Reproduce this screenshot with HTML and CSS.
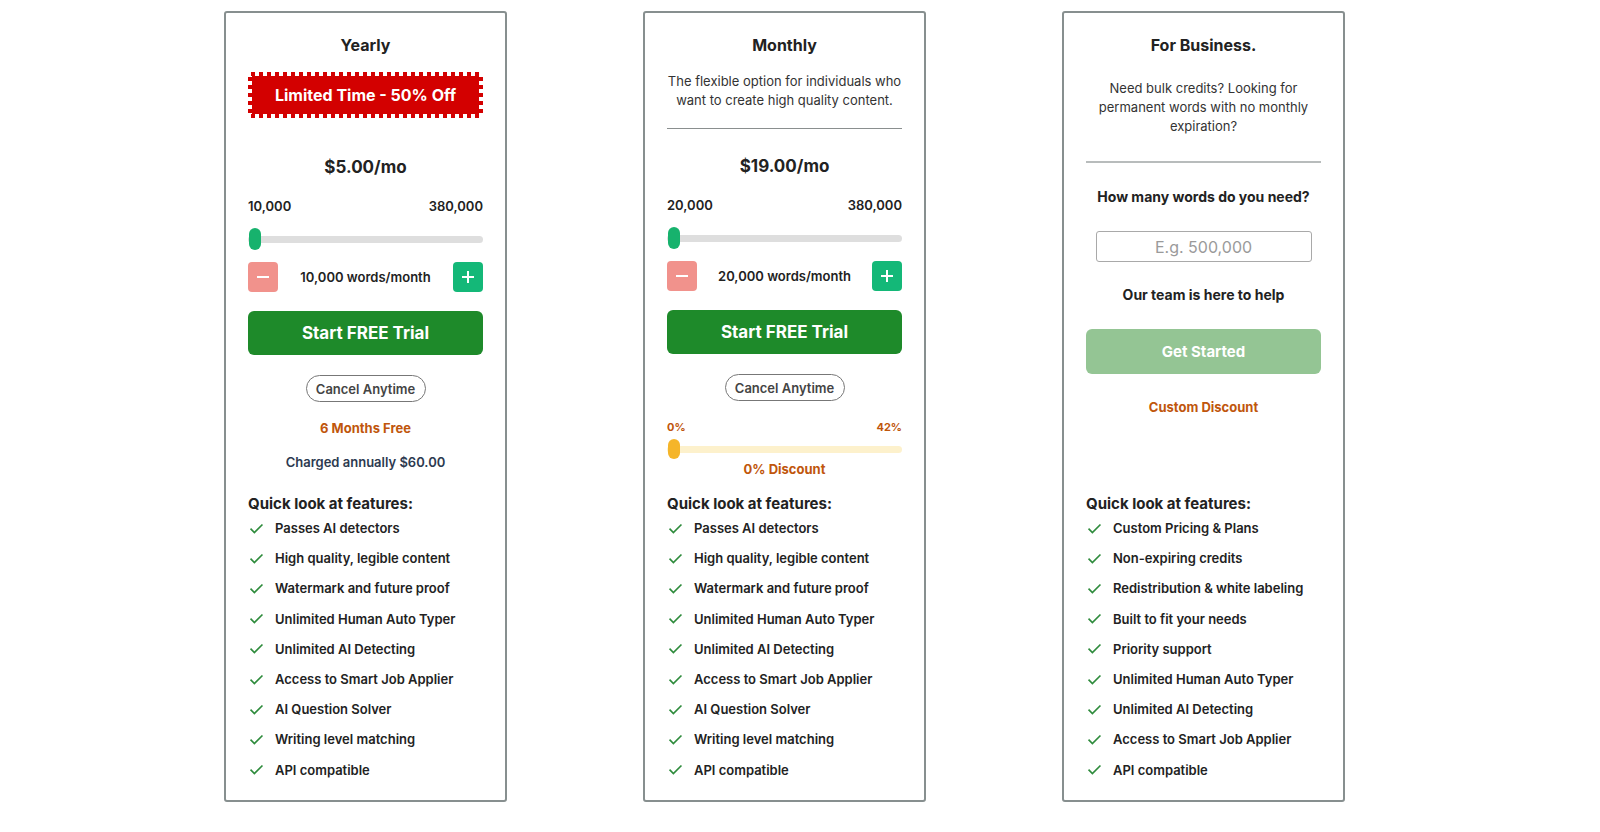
FILE: index.html
```html
<!DOCTYPE html>
<html lang="en">
<head>
<meta charset="utf-8">
<title>Pricing</title>
<link rel="stylesheet" href="styles.css">
</head>
<body>
<div class="plans">
  <!-- Yearly -->
  <div class="card">
    <div class="top">
      <h2 class="title">Yearly</h2>
      <div class="stamp">Limited Time - 50% Off</div>
      <div class="price price-yearly">$5.00/mo</div>
      <div class="range-labels"><span>10,000</span><span>380,000</span></div>
      <div class="slider"><div class="track"></div><div class="thumb"></div></div>
      <div class="stepper">
        <button class="step minus"><svg width="14" height="14" viewBox="0 0 14 14"><path d="M1 7h12" stroke="#fff" stroke-width="2"/></svg></button>
        <span class="step-label">10,000 words/month</span>
        <button class="step plus"><svg width="14" height="14" viewBox="0 0 14 14"><path d="M1 7h12M7 1v12" stroke="#fff" stroke-width="2"/></svg></button>
      </div>
      <button class="cta">Start FREE Trial</button>
      <div class="pill-row"><span class="pill">Cancel Anytime</span></div>
      <div class="orange promo">6 Months Free</div>
      <div class="charged">Charged annually $60.00</div>
    </div>
    <div class="features">
      <div class="features-head">Quick look at features:</div>
      <ul>
        <li><svg class="check" viewBox="0 0 16 12"><path d="M1.5 6.2l4.2 4.2L14.5 1.6" fill="none" stroke="#2e8b3c" stroke-width="1.8"/></svg>Passes AI detectors</li>
        <li><svg class="check" viewBox="0 0 16 12"><path d="M1.5 6.2l4.2 4.2L14.5 1.6" fill="none" stroke="#2e8b3c" stroke-width="1.8"/></svg>High quality, legible content</li>
        <li><svg class="check" viewBox="0 0 16 12"><path d="M1.5 6.2l4.2 4.2L14.5 1.6" fill="none" stroke="#2e8b3c" stroke-width="1.8"/></svg>Watermark and future proof</li>
        <li><svg class="check" viewBox="0 0 16 12"><path d="M1.5 6.2l4.2 4.2L14.5 1.6" fill="none" stroke="#2e8b3c" stroke-width="1.8"/></svg>Unlimited Human Auto Typer</li>
        <li><svg class="check" viewBox="0 0 16 12"><path d="M1.5 6.2l4.2 4.2L14.5 1.6" fill="none" stroke="#2e8b3c" stroke-width="1.8"/></svg>Unlimited AI Detecting</li>
        <li><svg class="check" viewBox="0 0 16 12"><path d="M1.5 6.2l4.2 4.2L14.5 1.6" fill="none" stroke="#2e8b3c" stroke-width="1.8"/></svg>Access to Smart Job Applier</li>
        <li><svg class="check" viewBox="0 0 16 12"><path d="M1.5 6.2l4.2 4.2L14.5 1.6" fill="none" stroke="#2e8b3c" stroke-width="1.8"/></svg>AI Question Solver</li>
        <li><svg class="check" viewBox="0 0 16 12"><path d="M1.5 6.2l4.2 4.2L14.5 1.6" fill="none" stroke="#2e8b3c" stroke-width="1.8"/></svg>Writing level matching</li>
        <li><svg class="check" viewBox="0 0 16 12"><path d="M1.5 6.2l4.2 4.2L14.5 1.6" fill="none" stroke="#2e8b3c" stroke-width="1.8"/></svg>API compatible</li>
      </ul>
    </div>
  </div>

  <!-- Monthly -->
  <div class="card">
    <div class="top">
      <h2 class="title">Monthly</h2>
      <p class="desc desc-monthly">The flexible option for individuals who want to create high quality content.</p>
      <hr class="rule rule-monthly">
      <div class="price price-monthly">$19.00/mo</div>
      <div class="range-labels"><span>20,000</span><span>380,000</span></div>
      <div class="slider"><div class="track"></div><div class="thumb"></div></div>
      <div class="stepper">
        <button class="step minus"><svg width="14" height="14" viewBox="0 0 14 14"><path d="M1 7h12" stroke="#fff" stroke-width="2"/></svg></button>
        <span class="step-label">20,000 words/month</span>
        <button class="step plus"><svg width="14" height="14" viewBox="0 0 14 14"><path d="M1 7h12M7 1v12" stroke="#fff" stroke-width="2"/></svg></button>
      </div>
      <button class="cta">Start FREE Trial</button>
      <div class="pill-row"><span class="pill">Cancel Anytime</span></div>
      <div class="range-labels orange small-labels"><span>0%</span><span>42%</span></div>
      <div class="slider discount-slider"><div class="track"></div><div class="thumb"></div></div>
      <div class="orange discount-label">0% Discount</div>
    </div>
    <div class="features">
      <div class="features-head">Quick look at features:</div>
      <ul>
        <li><svg class="check" viewBox="0 0 16 12"><path d="M1.5 6.2l4.2 4.2L14.5 1.6" fill="none" stroke="#2e8b3c" stroke-width="1.8"/></svg>Passes AI detectors</li>
        <li><svg class="check" viewBox="0 0 16 12"><path d="M1.5 6.2l4.2 4.2L14.5 1.6" fill="none" stroke="#2e8b3c" stroke-width="1.8"/></svg>High quality, legible content</li>
        <li><svg class="check" viewBox="0 0 16 12"><path d="M1.5 6.2l4.2 4.2L14.5 1.6" fill="none" stroke="#2e8b3c" stroke-width="1.8"/></svg>Watermark and future proof</li>
        <li><svg class="check" viewBox="0 0 16 12"><path d="M1.5 6.2l4.2 4.2L14.5 1.6" fill="none" stroke="#2e8b3c" stroke-width="1.8"/></svg>Unlimited Human Auto Typer</li>
        <li><svg class="check" viewBox="0 0 16 12"><path d="M1.5 6.2l4.2 4.2L14.5 1.6" fill="none" stroke="#2e8b3c" stroke-width="1.8"/></svg>Unlimited AI Detecting</li>
        <li><svg class="check" viewBox="0 0 16 12"><path d="M1.5 6.2l4.2 4.2L14.5 1.6" fill="none" stroke="#2e8b3c" stroke-width="1.8"/></svg>Access to Smart Job Applier</li>
        <li><svg class="check" viewBox="0 0 16 12"><path d="M1.5 6.2l4.2 4.2L14.5 1.6" fill="none" stroke="#2e8b3c" stroke-width="1.8"/></svg>AI Question Solver</li>
        <li><svg class="check" viewBox="0 0 16 12"><path d="M1.5 6.2l4.2 4.2L14.5 1.6" fill="none" stroke="#2e8b3c" stroke-width="1.8"/></svg>Writing level matching</li>
        <li><svg class="check" viewBox="0 0 16 12"><path d="M1.5 6.2l4.2 4.2L14.5 1.6" fill="none" stroke="#2e8b3c" stroke-width="1.8"/></svg>API compatible</li>
      </ul>
    </div>
  </div>

  <!-- Business -->
  <div class="card">
    <div class="top">
      <h2 class="title">For Business.</h2>
      <p class="desc desc-business">Need bulk credits? Looking for permanent words with no monthly expiration?</p>
      <hr class="rule rule-business">
      <div class="question">How many words do you need?</div>
      <div class="input-row"><input class="words-input" type="text" placeholder="E.g. 500,000"></div>
      <div class="question help">Our team is here to help</div>
      <button class="cta cta-light">Get Started</button>
      <div class="orange custom">Custom Discount</div>
    </div>
    <div class="features">
      <div class="features-head">Quick look at features:</div>
      <ul>
        <li><svg class="check" viewBox="0 0 16 12"><path d="M1.5 6.2l4.2 4.2L14.5 1.6" fill="none" stroke="#2e8b3c" stroke-width="1.8"/></svg>Custom Pricing &amp; Plans</li>
        <li><svg class="check" viewBox="0 0 16 12"><path d="M1.5 6.2l4.2 4.2L14.5 1.6" fill="none" stroke="#2e8b3c" stroke-width="1.8"/></svg>Non-expiring credits</li>
        <li><svg class="check" viewBox="0 0 16 12"><path d="M1.5 6.2l4.2 4.2L14.5 1.6" fill="none" stroke="#2e8b3c" stroke-width="1.8"/></svg>Redistribution &amp; white labeling</li>
        <li><svg class="check" viewBox="0 0 16 12"><path d="M1.5 6.2l4.2 4.2L14.5 1.6" fill="none" stroke="#2e8b3c" stroke-width="1.8"/></svg>Built to fit your needs</li>
        <li><svg class="check" viewBox="0 0 16 12"><path d="M1.5 6.2l4.2 4.2L14.5 1.6" fill="none" stroke="#2e8b3c" stroke-width="1.8"/></svg>Priority support</li>
        <li><svg class="check" viewBox="0 0 16 12"><path d="M1.5 6.2l4.2 4.2L14.5 1.6" fill="none" stroke="#2e8b3c" stroke-width="1.8"/></svg>Unlimited Human Auto Typer</li>
        <li><svg class="check" viewBox="0 0 16 12"><path d="M1.5 6.2l4.2 4.2L14.5 1.6" fill="none" stroke="#2e8b3c" stroke-width="1.8"/></svg>Unlimited AI Detecting</li>
        <li><svg class="check" viewBox="0 0 16 12"><path d="M1.5 6.2l4.2 4.2L14.5 1.6" fill="none" stroke="#2e8b3c" stroke-width="1.8"/></svg>Access to Smart Job Applier</li>
        <li><svg class="check" viewBox="0 0 16 12"><path d="M1.5 6.2l4.2 4.2L14.5 1.6" fill="none" stroke="#2e8b3c" stroke-width="1.8"/></svg>API compatible</li>
      </ul>
    </div>
  </div>
</div>
</body>
</html>
```

FILE: styles.css
```css
* { box-sizing: border-box; }
html, body { margin: 0; padding: 0; background: #fff; }
body {
  font-family: "Inter", "Liberation Sans", sans-serif;
  color: #222;
  width: 1600px;
  height: 832px;
  overflow: hidden;
}
.plans {
  display: flex;
  gap: 136px;
  padding: 11px 0 0 224px;
}
.card {
  width: 283px;
  height: 791px;
  border: 2px solid #878f8f;
  border-radius: 3px;
  padding: 0 22px;
  display: flex;
  flex-direction: column;
}
.top {
  height: 480px;
  padding-top: 21px;
  display: flex;
  flex-direction: column;
}
.title {
  margin: 0;
  font-size: 16px;
  line-height: 22px;
  font-weight: 700;
  text-align: center;
  color: #222;
}
.stamp {
  margin-top: 16px;
  height: 46px;
  color: #fff;
  font-weight: 700;
  font-size: 16px;
  display: flex;
  align-items: center;
  justify-content: center;
  background:
    linear-gradient(#d30000, #d30000) 4px 4px / calc(100% - 8px) calc(100% - 8px) no-repeat,
    repeating-linear-gradient(90deg, #d30000 0 4px, transparent 4px 8px) 3px 0 / calc(100% - 6px) 4px no-repeat,
    repeating-linear-gradient(90deg, #d30000 0 4px, transparent 4px 8px) 3px 100% / calc(100% - 6px) 4px no-repeat,
    repeating-linear-gradient(180deg, #d30000 0 4px, transparent 4px 8px) 0 5px / 4px calc(100% - 10px) no-repeat,
    repeating-linear-gradient(180deg, #d30000 0 4px, transparent 4px 8px) 100% 5px / 4px calc(100% - 10px) no-repeat;
}
.desc {
  margin: 0;
  font-size: 13px;
  line-height: 19px;
  text-align: center;
  color: #333;
}
.desc-monthly { margin-top: 16px; }
.desc-business { margin-top: 23px; padding: 0 8px; }
.rule {
  border: 0;
  height: 1px;
  background: #8a8f8f;
  margin: 0;
}
.rule-monthly { margin-top: 18px; }
.rule-business { margin-top: 25px; height: 2px; background: #b8bcbc; }
.price {
  font-size: 17px;
  line-height: 24px;
  font-weight: 700;
  text-align: center;
  color: #222;
}
.price-yearly { margin-top: 37px; }
.price-monthly { margin-top: 25px; }
.range-labels {
  margin-top: 18px;
  display: flex;
  justify-content: space-between;
  font-size: 13px;
  line-height: 18px;
  font-weight: 600;
  color: #222;
}
.slider {
  position: relative;
  margin-top: 13px;
  height: 22px;
  display: flex;
  align-items: center;
}
.track {
  width: 100%;
  height: 7px;
  border-radius: 4px;
  background: #dedede;
}
.thumb {
  position: absolute;
  left: 1px;
  top: 0;
  width: 12px;
  height: 22px;
  border-radius: 6px;
  background: #17b26d;
}
.stepper {
  margin-top: 12px;
  display: flex;
  align-items: center;
  justify-content: space-between;
  height: 30px;
}
.step {
  width: 30px;
  height: 30px;
  border: 0;
  border-radius: 4px;
  padding: 0;
  display: flex;
  align-items: center;
  justify-content: center;
}
.minus { background: #f1928c; }
.plus { background: #14b878; }
.step-label {
  font-size: 13px;
  font-weight: 600;
  color: #222;
}
.cta {
  margin-top: 19px;
  height: 44px;
  width: 100%;
  border: 0;
  border-radius: 6px;
  background: #1e8a2a;
  color: #fff;
  font-family: inherit;
  font-size: 17px;
  font-weight: 700;
}
.pill-row {
  margin-top: 20px;
  display: flex;
  justify-content: center;
}
.pill {
  height: 27px;
  width: 120px;
  border: 1px solid #777;
  border-radius: 14px;
  display: flex;
  align-items: center;
  justify-content: center;
  font-size: 13px;
  font-weight: 600;
  color: #444;
}
.orange { color: #c0560c; font-weight: 700; }
.promo {
  margin-top: 17px;
  font-size: 13px;
  line-height: 18px;
  text-align: center;
}
.charged {
  margin-top: 16px;
  font-size: 13px;
  line-height: 18px;
  font-weight: 600;
  text-align: center;
  color: #2d3a50;
}
.small-labels {
  margin-top: 18px;
  font-size: 11px;
  line-height: 16px;
  font-weight: 700;
  color: #c0560c;
}
.discount-slider { margin-top: 4px; height: 20px; }
.discount-slider .track { background: #fdf1cc; }
.discount-slider .thumb { height: 20px; width: 12px; background: #f5b52a; }
.discount-label {
  margin-top: 1px;
  font-size: 13px;
  line-height: 18px;
  text-align: center;
}
.question {
  margin-top: 24px;
  font-size: 14px;
  line-height: 20px;
  font-weight: 700;
  text-align: center;
  color: #222;
}
.input-row {
  margin-top: 24px;
  display: flex;
  justify-content: center;
}
.words-input {
  width: 216px;
  height: 31px;
  border: 1px solid #a9a9a9;
  border-radius: 3px;
  font-family: inherit;
  font-size: 16px;
  text-align: center;
  color: #333;
  outline: none;
}
.words-input::placeholder { color: #9a9a9a; }
.help { margin-top: 23px; }
.cta-light {
  margin-top: 24px;
  height: 45px;
  background: #94c594;
  font-size: 15px;
}
.custom {
  margin-top: 24px;
  font-size: 13px;
  line-height: 18px;
  text-align: center;
}
.features-head {
  font-size: 15px;
  line-height: 20px;
  font-weight: 700;
  color: #222;
  margin-top: 1px;
  margin-bottom: -1px;
}
.features ul {
  list-style: none;
  margin: 0;
  padding: 0;
}
.features li {
  height: 30.2px;
  display: flex;
  align-items: center;
  font-size: 13px;
  font-weight: 600;
  color: #222;
}
.check {
  width: 15px;
  height: 11px;
  margin-left: 1px;
  margin-right: 11px;
  flex: none;
}
```
